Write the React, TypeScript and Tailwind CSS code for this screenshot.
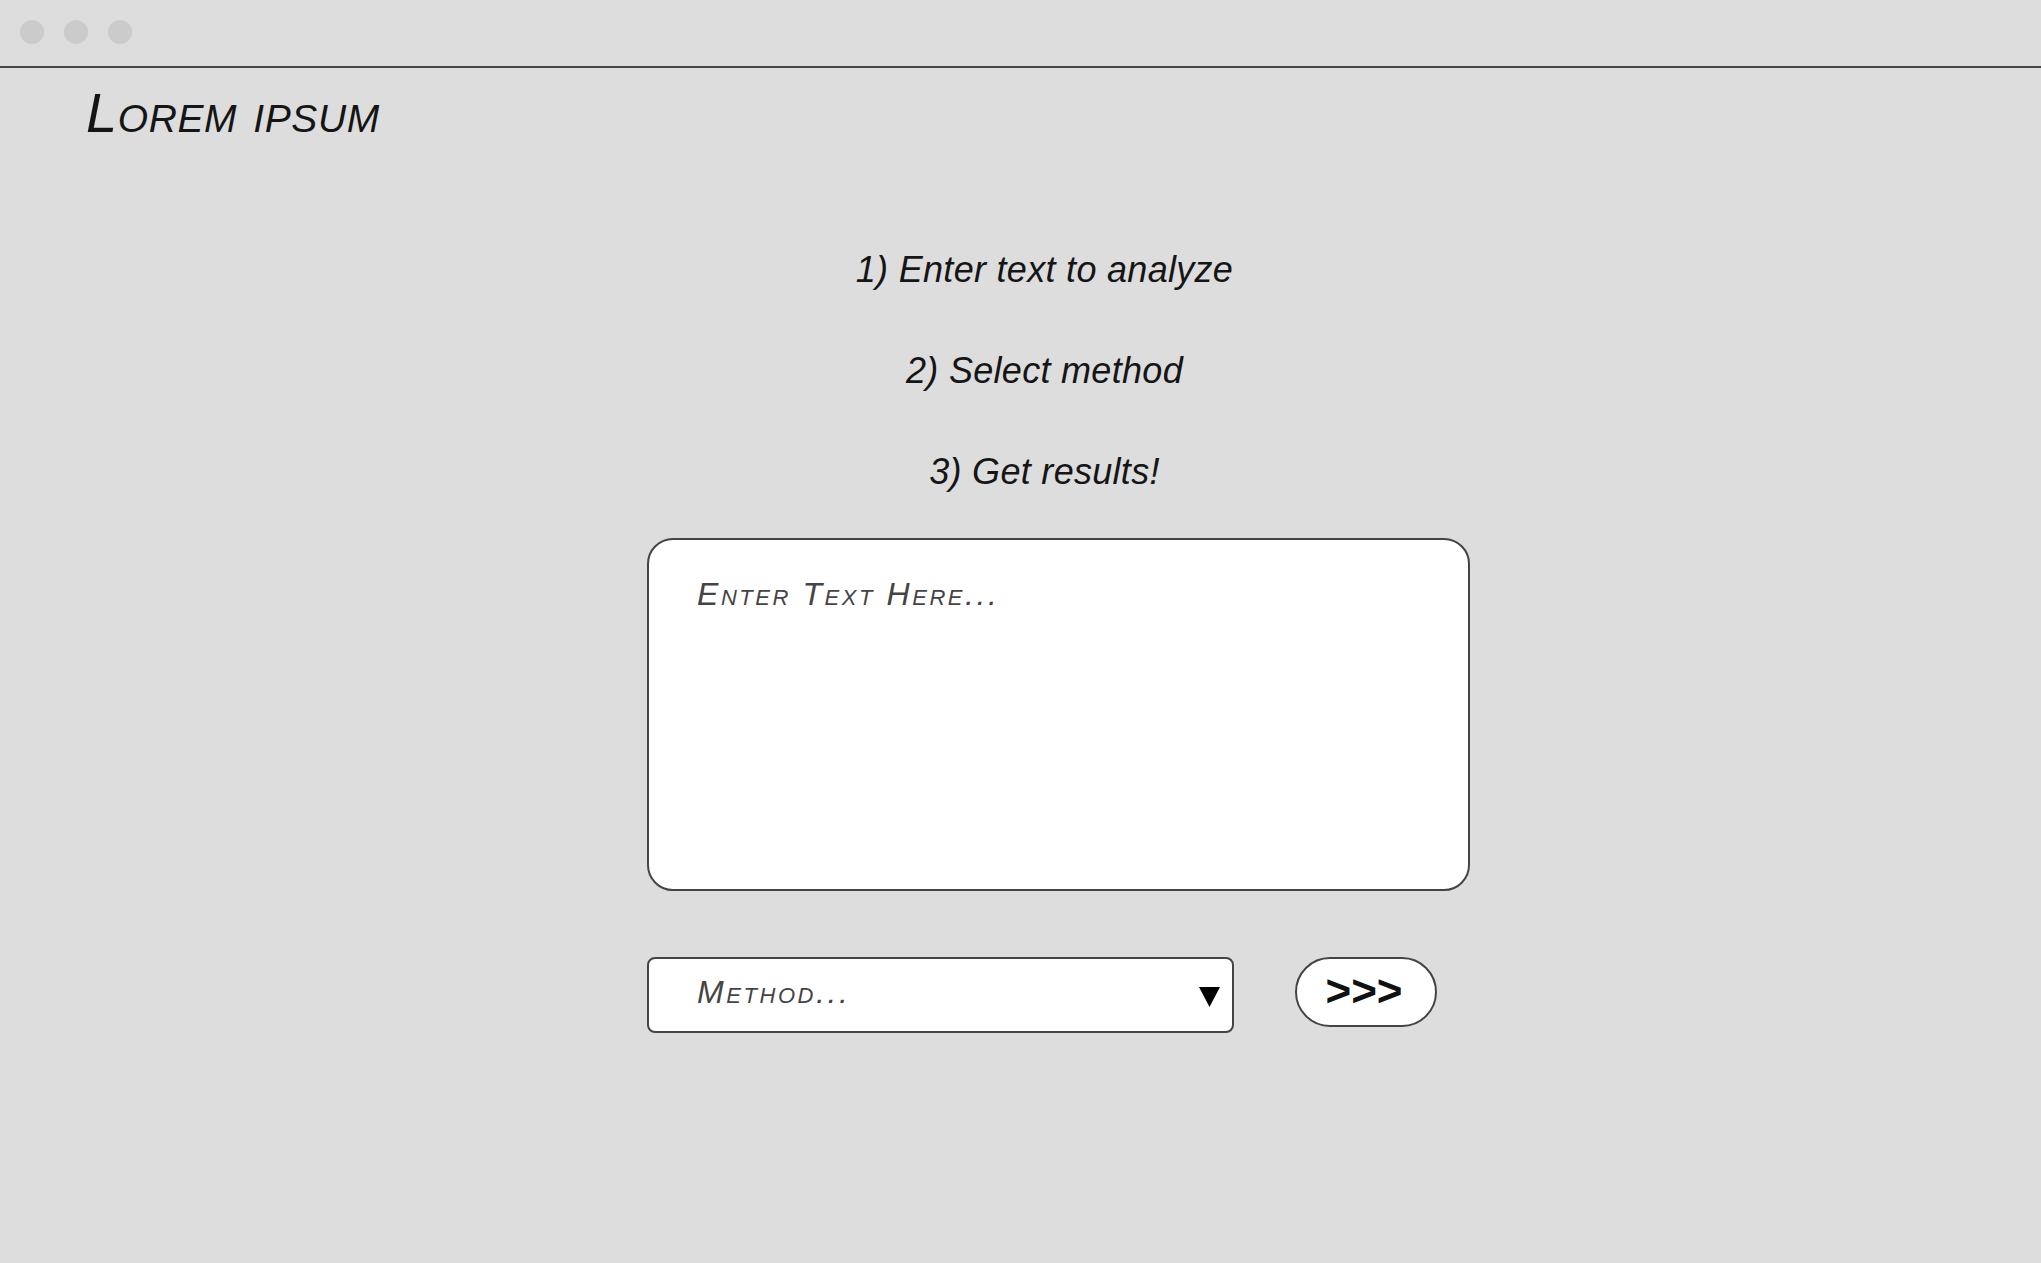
import React from 'react';

const steps = ['1) Enter text to analyze', '2) Select method', '3) Get results!'];

const App: React.FC = () => {
  return (
    <div className="min-h-[1263px] w-full bg-[#dddddd] font-['Liberation_Sans',Arial,sans-serif] italic text-[#151515]">
      {/* window chrome */}
      <div className="h-[68px] border-b-2 border-[#444444] flex items-start gap-[20px] pl-[20px] pt-[20px]">
        <span className="w-[24px] h-[24px] rounded-full bg-[#cbcbcb]" />
        <span className="w-[24px] h-[24px] rounded-full bg-[#cbcbcb]" />
        <span className="w-[24px] h-[24px] rounded-full bg-[#cbcbcb]" />
      </div>

      <h1 className="mt-[17px] ml-[86px] text-[56px] leading-[56px] font-normal tracking-[0.6px] [font-variant:small-caps]">
        Lorem ipsum
      </h1>

      <div className="ml-[647px] w-[823px]">
        <div className="mt-[111px] w-[795px] flex flex-col items-center gap-[65px]">
          {steps.map((s) => (
            <p key={s} className="text-[36px] leading-[36px] h-[36px] tracking-[0.3px] whitespace-nowrap">
              {s}
            </p>
          ))}
        </div>

        <textarea
          placeholder="Enter Text Here..."
          className="mt-[48px] block w-[823px] h-[353px] resize-none bg-white border-2 border-[#444444] rounded-[26px] pl-[48px] pr-[24px] pt-[30px] text-[32px] leading-[48px] italic tracking-[0.08em] [font-variant:small-caps] text-[#333333] placeholder:text-[#444444] outline-none"
        />

        <div className="mt-[66px] flex items-start gap-[61px]">
          <div className="w-[587px] h-[76px] bg-white border-2 border-[#444444] rounded-[8px] flex items-center pl-[48px] pr-[12px] pb-[6px]">
            <span className="flex-1 text-[32px] leading-[48px] tracking-[0.08em] [font-variant:small-caps] text-[#444444]">
              Method...
            </span>
            <svg width="21" height="20" viewBox="0 0 21 20" className="mt-[10px]">
              <polygon points="0,0 21,0 10.5,20" fill="#000000" />
            </svg>
          </div>

          <button className="w-[142px] h-[70px] bg-white border-2 border-[#444444] rounded-full flex items-center justify-center text-[44px] leading-none font-bold not-italic text-[#111111] pb-[3px] pr-[4px]">
            &gt;&gt;&gt;
          </button>
        </div>
      </div>
    </div>
  );
};

export default App;
